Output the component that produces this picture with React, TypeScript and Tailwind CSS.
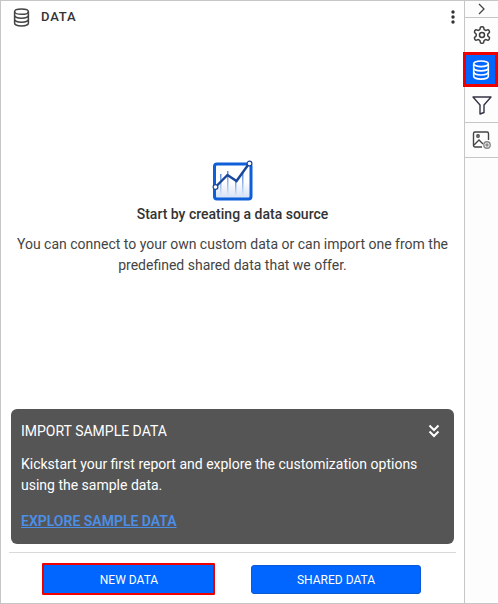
import React from "react";

const roboto = { fontFamily: "Roboto, sans-serif" };

function Db({ className, color }: { className?: string; color: string }) {
  return (
    <svg className={className} viewBox="0 0 18 20" fill="none" stroke={color} strokeWidth="1.6">
      <ellipse cx="9" cy="3.8" rx="7.3" ry="2.8" />
      <path d="M1.7 3.8v12.4c0 1.6 3.3 2.9 7.3 2.9s7.3-1.3 7.3-2.9V3.8" />
      <path d="M1.7 8c0 1.6 3.3 2.9 7.3 2.9s7.3-1.3 7.3-2.9" />
      <path d="M1.7 12.1c0 1.6 3.3 2.9 7.3 2.9s7.3-1.3 7.3-2.9" />
    </svg>
  );
}

export default function App() {
  return (
    <div className="flex h-[604px] w-[498px] bg-white text-[#333]" style={roboto}>
      <div className="flex h-[604px] w-[465px] shrink-0 flex-col border-y border-r border-l border-[#c6c6c6]">
        <div className="flex h-[32px] shrink-0 items-center pl-[12px] pr-[8px]">
          <Db className="h-[19px] w-[17px]" color="#444" />
          <span className="ml-[11px] text-[13px] font-medium tracking-[0.8px] text-[#333]">DATA</span>
          <svg className="ml-auto h-[16px] w-[6px]" viewBox="0 0 6 16" fill="#333">
            <circle cx="3" cy="3" r="1.7" />
            <circle cx="3" cy="8" r="1.7" />
            <circle cx="3" cy="13" r="1.7" />
          </svg>
        </div>
        <div className="flex flex-col items-center pt-[127px]">
          <svg className="h-[42px] w-[42px]" viewBox="0 0 42 42" fill="none">
            <defs>
              <linearGradient id="g" x1="0" y1="0" x2="0" y2="1">
                <stop offset="0" stopColor="#ffffff" />
                <stop offset="0.5" stopColor="#ffffff" />
                <stop offset="1" stopColor="#d3e0f6" />
              </linearGradient>
              <linearGradient id="b" x1="0" y1="0" x2="0" y2="1">
                <stop offset="0" stopColor="#5f8fe0" />
                <stop offset="1" stopColor="#dbe6f8" />
              </linearGradient>
            </defs>
            <rect x="2.5" y="4" width="36.5" height="35" rx="2.5" fill="url(#g)" stroke="#0f5fd8" strokeWidth="3" />
            <rect x="8" y="14" width="1.5" height="22" fill="url(#b)" />
            <rect x="15" y="11" width="1.5" height="25" fill="url(#b)" />
            <rect x="23" y="20" width="1.5" height="16" fill="url(#b)" />
            <rect x="30" y="13" width="1.5" height="23" fill="url(#b)" />
            <path d="M3.5 27 L15.5 15 L24.5 21 L37.5 3" stroke="#18479c" strokeWidth="2.4" />
            <circle cx="3.5" cy="27" r="2.4" fill="#fff" stroke="#18479c" strokeWidth="1.2" />
            <circle cx="37.5" cy="3.5" r="2.4" fill="#fff" stroke="#18479c" strokeWidth="1.2" />
          </svg>
          <p className="mt-[2px] text-[14px] font-medium leading-[20px] text-[#333]">Start by creating a data source</p>
          <p className="mt-[10px] w-[440px] text-center text-[14px] leading-[21px] text-[#444]">
            You can connect to your own custom data or can import one from the predefined shared data that we offer.
          </p>
        </div>
        <div className="mt-auto flex flex-col">
          <div className="mx-[10px] h-[135px] rounded-[6px] bg-[#555555] px-[10px] pt-[12px] text-white">
            <div className="flex items-center justify-between pr-[4px]">
              <span className="text-[14px] font-normal leading-[20px]">IMPORT SAMPLE DATA</span>
              <svg className="h-[14px] w-[12px]" viewBox="0 0 12 14" fill="none" stroke="#fff" strokeWidth="2">
                <path d="M1.5 1.5 6 6l4.5-4.5M1.5 7.5 6 12l4.5-4.5" />
              </svg>
            </div>
            <p className="mt-[13px] text-[14px] font-normal leading-[21px] text-white">
              Kickstart your first report and explore the customization options using the sample data.
            </p>
            <a className="mt-[15px] block text-[14px] font-semibold leading-[20px] text-[#4b8fe8] underline">EXPLORE SAMPLE DATA</a>
          </div>
          <div className="mx-[8px] mt-[8px] h-px bg-[#d9d9d9]" />
          <div className="flex h-[50px] items-start pl-[41px] pt-[10px]">
            <button className="h-[32px] w-[173px] rounded-[1px] border-2 border-[#ee0000] bg-[#0066ff] pl-[1px] pt-[1px] text-[12px] font-normal text-white">NEW DATA</button>
            <button className="ml-[36px] mt-[2px] h-[29px] w-[170px] rounded-[3px] border border-[#0a5ad4] bg-[#0066ff] text-[12px] font-normal text-white">SHARED DATA</button>
          </div>
        </div>
      </div>
      <div className="flex w-[33px] flex-col border-y border-[#c6c6c6] bg-[#fdfdfd]">
        <div className="flex h-[17px] items-center justify-center border-b border-[#c6c6c6]">
          <svg className="h-[12px] w-[7px]" viewBox="0 0 7 12" fill="none" stroke="#444" strokeWidth="1.3">
            <path d="M1 1l5 5-5 5" />
          </svg>
        </div>
        <div className="flex h-[34px] items-center justify-center">
          <svg className="h-[20px] w-[20px]" viewBox="0 0 24 24" fill="none" stroke="#3d3d3d" strokeWidth="1.8" strokeLinecap="round" strokeLinejoin="round">
            <path d="M12.22 2h-.44a2 2 0 0 0-2 2v.18a2 2 0 0 1-1 1.73l-.43.25a2 2 0 0 1-2 0l-.15-.08a2 2 0 0 0-2.73.73l-.22.38a2 2 0 0 0 .73 2.73l.15.1a2 2 0 0 1 1 1.72v.51a2 2 0 0 1-1 1.74l-.15.09a2 2 0 0 0-.73 2.73l.22.38a2 2 0 0 0 2.73.73l.15-.08a2 2 0 0 1 2 0l.43.25a2 2 0 0 1 1 1.73V20a2 2 0 0 0 2 2h.44a2 2 0 0 0 2-2v-.18a2 2 0 0 1 1-1.73l.43-.25a2 2 0 0 1 2 0l.15.08a2 2 0 0 0 2.73-.73l.22-.39a2 2 0 0 0-.73-2.73l-.15-.08a2 2 0 0 1-1-1.74v-.5a2 2 0 0 1 1-1.74l.15-.09a2 2 0 0 0 .73-2.73l-.22-.38a2 2 0 0 0-2.73-.73l-.15.08a2 2 0 0 1-2 0l-.43-.25a2 2 0 0 1-1-1.73V4a2 2 0 0 0-2-2z" />
            <circle cx="12" cy="12" r="3" />
          </svg>
        </div>
        <div className="-ml-[2px] flex h-[35px] w-[35px] items-center justify-center border-[3px] border-[#ee0000] bg-[#0066ff]">
          <Db className="h-[20px] w-[18px]" color="#ffffff" />
        </div>
        <div className="flex h-[36px] items-center justify-center border-b border-[#c6c6c6]">
          <svg className="h-[20px] w-[20px]" viewBox="0 0 20 20" fill="none" stroke="#334" strokeWidth="1.4" strokeLinejoin="round">
            <path d="M1 2h18l-7 8v7.5l-4 1.5v-9z" />
          </svg>
        </div>
        <div className="flex h-[35px] items-center justify-center border-b border-[#c6c6c6]">
          <svg className="h-[20px] w-[20px]" viewBox="0 0 20 20" fill="none" stroke="#444" strokeWidth="1.4">
            <path d="M10 17H3a1.5 1.5 0 0 1-1.5-1.5v-12A1.5 1.5 0 0 1 3 2h12a1.5 1.5 0 0 1 1.5 1.5V10" />
            <path d="M2 15l5-5 4 4" />
            <circle cx="6" cy="6" r="1.2" />
            <circle cx="15" cy="15" r="3.2" stroke="#888" />
            <circle cx="15" cy="15" r="1" stroke="#888" />
          </svg>
        </div>
      </div>
    </div>
  );
}
